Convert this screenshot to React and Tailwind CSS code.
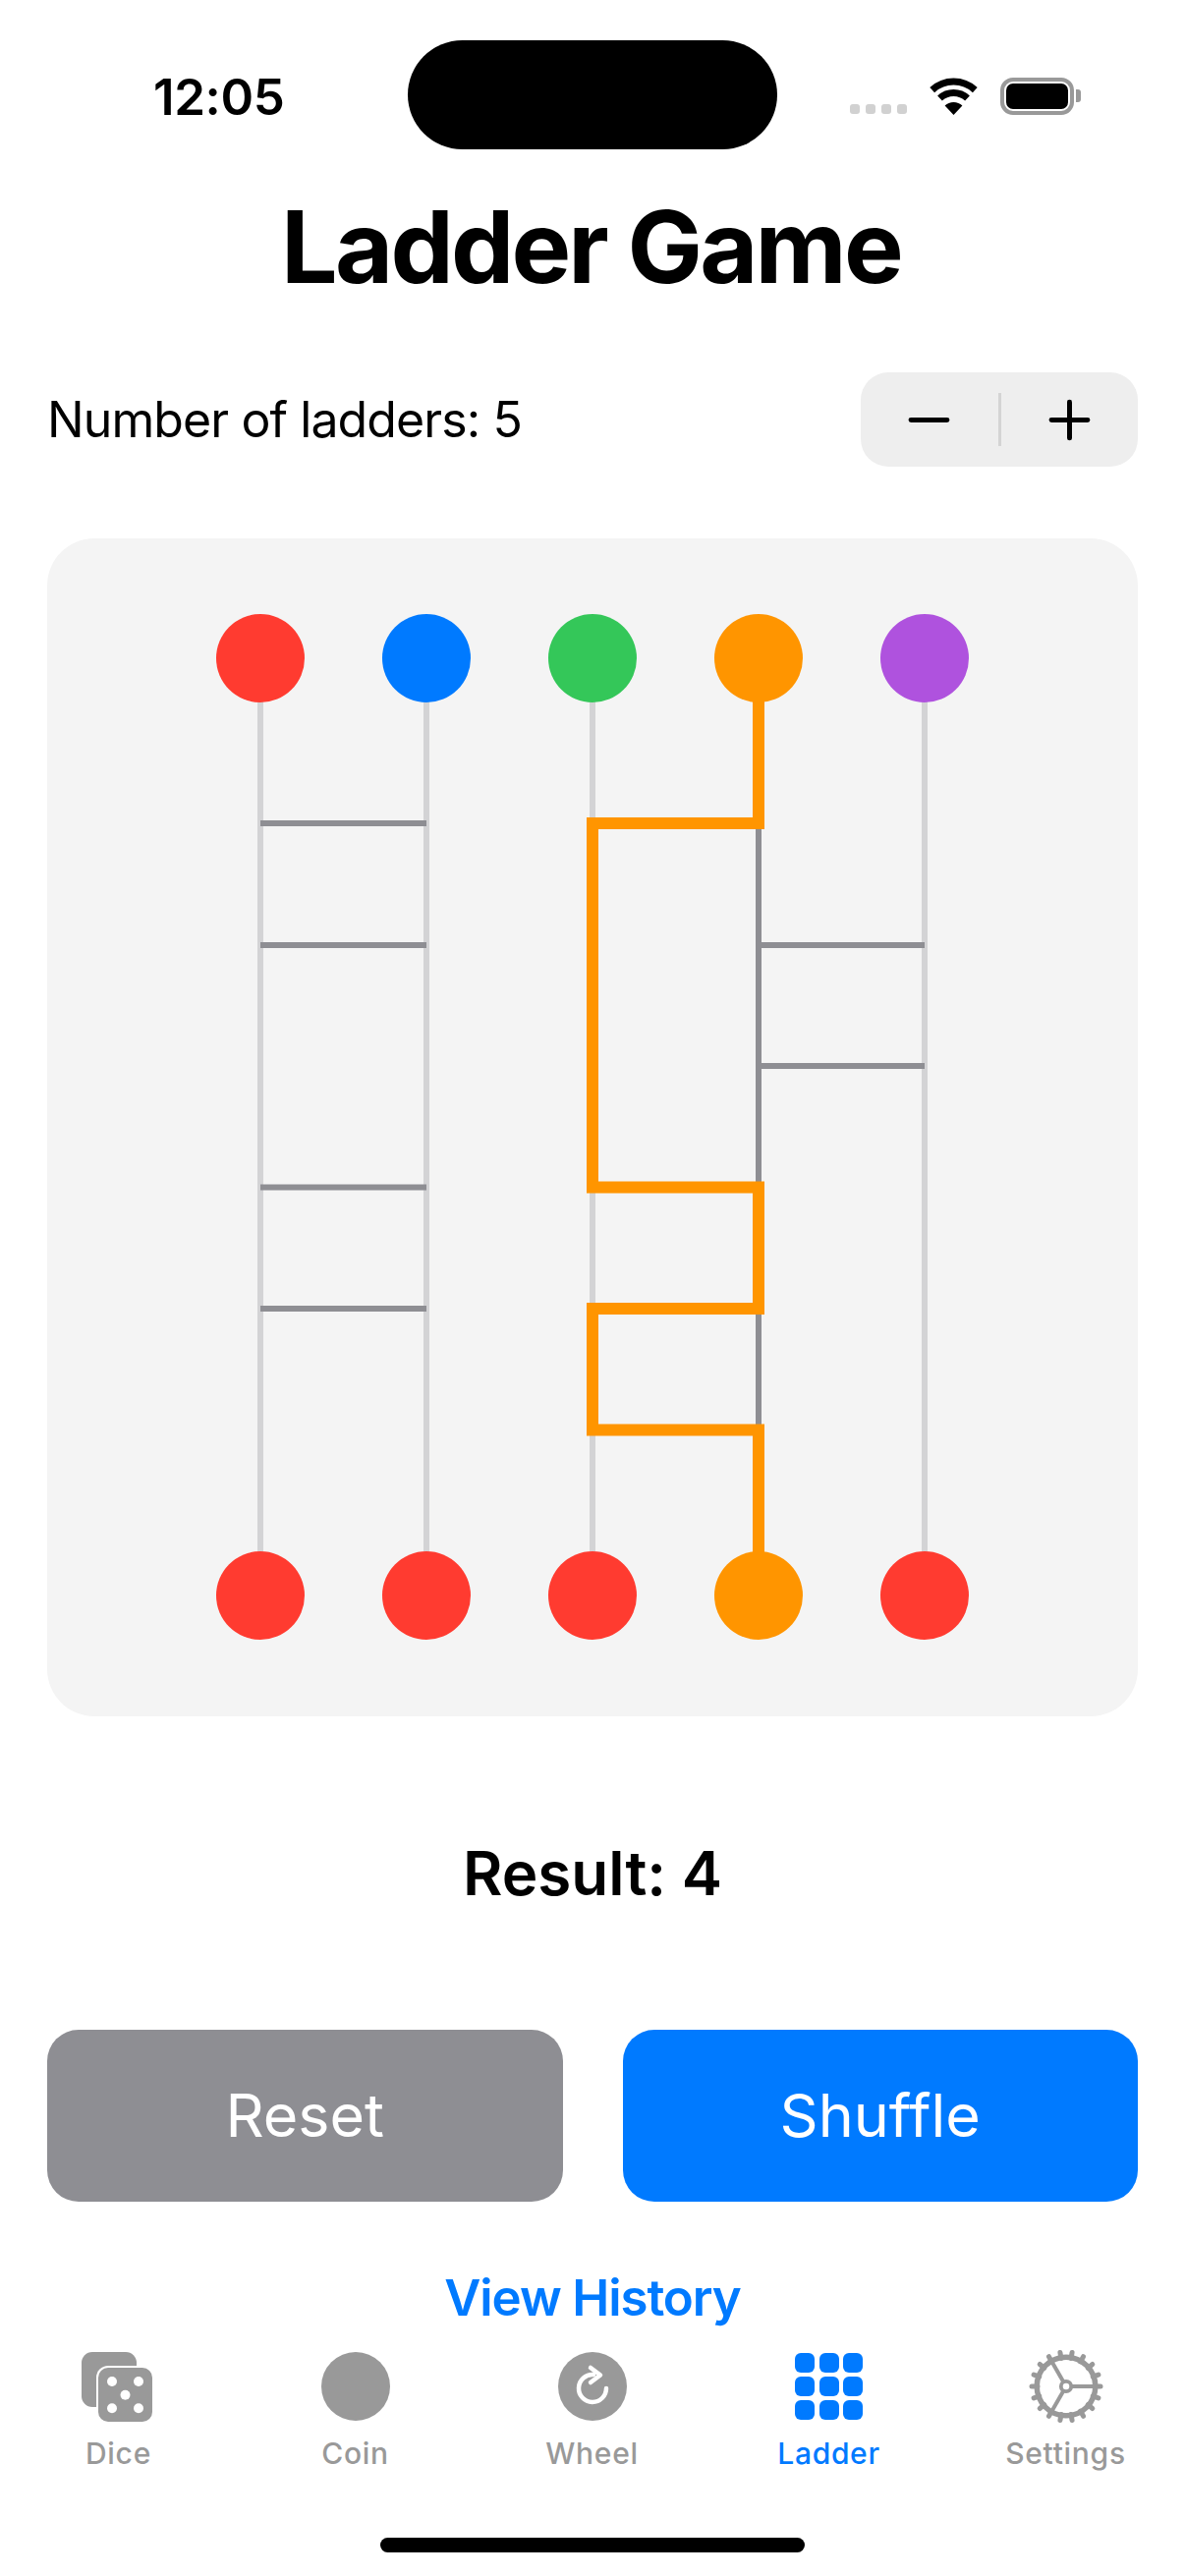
import { Minus, Plus } from "lucide-react";

const topColors = ["#ff3b30", "#007aff", "#34c759", "#ff9500", "#af52de"];
const bottomColors = ["#ff3b30", "#ff3b30", "#ff3b30", "#ff9500", "#ff3b30"];
const columns = [265, 434, 603, 772, 941];

// [left column index, y] for the plain grey rungs
const rungs = [
  [0, 838],
  [0, 962],
  [0, 1208.6],
  [0, 1332],
  [3, 962],
  [3, 1085],
];

const gearTeeth = Array.from({ length: 18 }, (_, i) => i * 20);

function WifiIcon() {
  return (
    <svg width="51" height="38" viewBox="0 0 51 38" fill="none">
      <path d="M3.7 12.6A32 32 0 0 1 47.3 12.6" stroke="#000" strokeWidth="7" />
      <path d="M11.5 21A20.5 20.5 0 0 1 39.5 21" stroke="#000" strokeWidth="7" />
      <path d="M25.5 38L16.6 28.5A13 13 0 0 1 34.4 28.5Z" fill="#000" />
    </svg>
  );
}

function Battery() {
  return (
    <div className="flex items-center gap-[2px]">
      <div className="w-[75px] h-[38px] rounded-[13px] border-[4px] border-[#999999] p-[2px]">
        <div className="w-full h-full rounded-[7px] bg-black" />
      </div>
      <div className="w-[5px] h-[13px] rounded-r-[3px] bg-[#999999]" />
    </div>
  );
}

function StatusBar() {
  return (
    <div className="flex items-center h-[111px] mt-[41px]">
      <div className="w-[415px] shrink-0 pl-[156px] pt-[3px] text-[51px] leading-none font-semibold tracking-[-0.4px] text-black">12:05</div>
      <div className="w-[376px] h-[111px] shrink-0 rounded-[56px] bg-black" />
      <div className="flex-1 flex items-end gap-[22px] pl-[74px] pt-[2px]">
        <div className="flex gap-[6px] pb-[1px]">
          <div className="w-[10px] h-[10px] rounded-[3px] bg-[#d1d1d1]" />
          <div className="w-[10px] h-[10px] rounded-[3px] bg-[#d1d1d1]" />
          <div className="w-[10px] h-[10px] rounded-[3px] bg-[#d1d1d1]" />
          <div className="w-[10px] h-[10px] rounded-[3px] bg-[#d1d1d1]" />
        </div>
        <WifiIcon />
        <Battery />
      </div>
    </div>
  );
}

function Board() {
  return (
    <div className="mx-[48px] mt-[73px] h-[1199px] rounded-[48px] bg-[#f4f4f4] overflow-hidden">
      <svg width="1110" height="1199" viewBox="48 548 1110 1199" className="block">
        {columns.map((x, i) => (
          <line key={x} x1={x} y1="670" x2={x} y2="1624" stroke={i === 3 ? "#8e8e93" : "#d3d3d5"} strokeWidth="6" />
        ))}
        {rungs.map(([col, y]) => (
          <line key={`${col}-${y}`} x1={columns[col]} y1={y} x2={columns[col + 1]} y2={y} stroke="#8e8e93" strokeWidth="6" />
        ))}
        <path
          d="M772 670V838H603V1208.6H772V1332H603V1455.4H772V1624"
          fill="none"
          stroke="#ff9500"
          strokeWidth="12"
          strokeLinejoin="miter"
        />
        {columns.map((x, i) => (
          <circle key={x} cx={x} cy="670" r="45" fill={topColors[i]} />
        ))}
        {columns.map((x, i) => (
          <circle key={x} cx={x} cy="1624" r="45" fill={bottomColors[i]} />
        ))}
      </svg>
    </div>
  );
}

function DiceIcon() {
  return (
    <svg width="75" height="71" viewBox="0 0 75 71">
      <rect x="0" y="0" width="56" height="56" rx="11" fill="#999999" />
      <rect x="15" y="14" width="59" height="59" rx="12" fill="#ffffff" />
      <rect x="17" y="16" width="55" height="55" rx="10" fill="#999999" />
      <circle cx="31" cy="30" r="5" fill="#ffffff" />
      <circle cx="58" cy="30" r="5" fill="#ffffff" />
      <circle cx="44.5" cy="43.7" r="5" fill="#ffffff" />
      <circle cx="31" cy="57.3" r="5" fill="#ffffff" />
      <circle cx="58" cy="57.3" r="5" fill="#ffffff" />
    </svg>
  );
}

function WheelIcon() {
  return (
    <svg width="70" height="70" viewBox="0 0 70 70" fill="none">
      <circle cx="35" cy="35" r="35" fill="#999999" />
      <path d="M49 37A14 14 0 1 1 36 23" stroke="#fff" strokeWidth="4.5" strokeLinecap="round" />
      <path d="M33 16L43 23.5L33 31" stroke="#fff" strokeWidth="4.5" strokeLinecap="round" strokeLinejoin="round" />
    </svg>
  );
}

function LadderIcon() {
  return (
    <div className="grid grid-cols-3 gap-[4.5px] w-[69px]">
      {Array.from({ length: 9 }, (_, i) => (
        <div key={i} className="h-[19.5px] rounded-[6px] bg-[#007aff]" />
      ))}
    </div>
  );
}

function GearIcon() {
  return (
    <svg width="76" height="76" viewBox="0 0 76 76" fill="none" stroke="#999999">
      <circle cx="38" cy="38" r="29.8" strokeWidth="5.5" />
      {gearTeeth.map((deg) => (
        <line key={deg} x1="67" y1="38" x2="73" y2="38" strokeWidth="5" strokeLinecap="round" transform={`rotate(${deg} 38 38)`} />
      ))}
      <line x1="43" y1="38" x2="68" y2="38" strokeWidth="4" />
      <line x1="35.5" y1="33.7" x2="23" y2="12" strokeWidth="4" />
      <line x1="35.5" y1="42.3" x2="23" y2="64" strokeWidth="4" />
      <circle cx="38" cy="38" r="5.2" strokeWidth="3.8" />
    </svg>
  );
}

function TabBar() {
  const tabs = [
    { label: "Dice", icon: <DiceIcon /> },
    { label: "Coin", icon: <div className="w-[70px] h-[70px] rounded-full bg-[#999999]" /> },
    { label: "Wheel", icon: <WheelIcon /> },
    { label: "Ladder", icon: <LadderIcon />, active: true },
    { label: "Settings", icon: <GearIcon /> },
  ];

  return (
    <div className="grid grid-cols-5 mt-[22px] pr-[1px]">
      {tabs.map((tab) => (
        <div key={tab.label} className="flex flex-col items-center">
          <div className="h-[76px] flex items-center">{tab.icon}</div>
          <div className={`mt-[12px] h-[36px] leading-[36px] text-[30px] font-[450] tracking-[0.7px] ${tab.active ? "text-[#007aff]" : "text-[#999999]"}`}>
            {tab.label}
          </div>
        </div>
      ))}
    </div>
  );
}

export default function App() {
  return (
    <div className="w-[1206px] h-[2622px] flex flex-col overflow-hidden bg-white text-black font-['Inter',sans-serif]">
      <StatusBar />

      <h1 className="mt-[39px] pr-[3px] h-[120px] leading-[120px] text-center text-[102px] font-bold tracking-[-2.8px]">Ladder Game</h1>

      {/* stepper row */}
      <div className="mt-[68px] px-[48px] flex items-center justify-between">
        <div className="text-[50px] tracking-[-0.9px]">Number of ladders: 5</div>
        <div className="w-[282px] h-[96px] rounded-[28px] bg-[#eeeeee] flex items-center">
          <div className="flex-1 flex justify-center">
            <Minus size={63} strokeWidth={1.9} color="#000" />
          </div>
          <div className="w-[3px] h-[54px] bg-[#d4d4d4]" />
          <div className="flex-1 flex justify-center">
            <Plus size={63} strokeWidth={1.9} color="#000" />
          </div>
        </div>
      </div>

      <Board />

      <div className="mt-[120px] h-[80px] leading-[80px] text-center text-[62px] font-semibold">Result: 4</div>

      <div className="mt-[119px] px-[48px] grid grid-cols-2 gap-[61px]">
        <button className="h-[175px] rounded-[32px] bg-[#8e8e93] text-white text-[61px]">Reset</button>
        <button className="h-[175px] rounded-[32px] bg-[#007aff] text-white text-[61px]">Shuffle</button>
      </div>

      <div className="mt-[68px] h-[60px] leading-[60px] text-center text-[51px] font-semibold tracking-[-1.1px] text-[#007aff]">View History</div>

      <TabBar />

      <div className="mt-[68px] w-[432px] h-[15px] rounded-full bg-black self-center" />
    </div>
  );
}
